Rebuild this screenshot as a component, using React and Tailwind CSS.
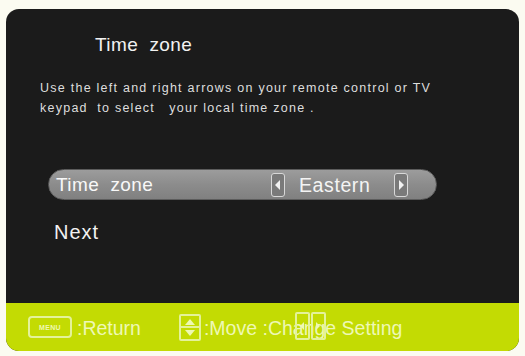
import React from "react";

const font = { fontFamily: '"Liberation Sans", Arial, sans-serif' };

const ArrowBox = ({ dir }) => (
  <span className="flex h-[24px] w-[14px] items-center justify-center rounded-[3px] border border-[#d8d8d8] bg-[#7a7a7a]">
    <svg width="8" height="12" viewBox="0 0 8 12">
      {dir === "left" ? (
        <polygon points="6,1 1,6 6,11" fill="#f2f2f2" />
      ) : (
        <polygon points="2,1 7,6 2,11" fill="#f2f2f2" />
      )}
    </svg>
  </span>
);

const App = () => {
  return (
    <div
      className="flex h-[356px] w-[525px] bg-[#fbfbf1] pl-[6px] pr-[6px] pt-[9px] pb-[5px]"
      style={font}
    >
      <div className="flex flex-1 flex-col overflow-hidden rounded-[13px] bg-[#1b1b1b]">
        <div className="flex flex-1 flex-col">
          <h1 className="ml-[89px] mt-[25px] text-[19px] leading-[22px] tracking-[0.4px] text-[#f2f2f2]">
            Time&nbsp; zone
          </h1>
          <p className="ml-[34px] mt-[22px] text-[12.5px] leading-[20px] tracking-[1.25px] text-[#dedede]">
            Use the left and right arrows on your remote control or TV
            <br />
            keypad&nbsp; to select&nbsp;&nbsp; your local time zone .
          </p>

          <div className="ml-[42px] mt-[51px] flex h-[31px] w-[389px] items-center rounded-full border border-[#5c5c5c] bg-gradient-to-b from-[#9c9c9c] via-[#8c8c8c] to-[#808080] pl-[7px]">
            <span className="w-[215px] text-[19px] leading-[22px] tracking-[0.4px] text-[#f8f8f8]">
              Time&nbsp; zone
            </span>
            <ArrowBox dir="left" />
            <span className="ml-[14px] w-[95px] text-[19.5px] leading-[22px] tracking-[0.6px] text-[#f4f4f4]">
              Eastern
            </span>
            <ArrowBox dir="right" />
          </div>

          <div className="ml-[48px] mt-[20px] text-[20px] leading-[24px] tracking-[1px] text-[#f2f2f2]">
            Next
          </div>
        </div>

        <div className="flex h-[48px] items-center bg-[#c3db03] pl-[22px] text-[19.5px] leading-[22px] text-[#eef8b4]">
          <span className="flex h-[22px] w-[44px] items-center justify-center rounded-[4px] border-2 border-[#e4f29a] text-[7px] font-bold leading-none tracking-[0.3px]">
            MENU
          </span>
          <span className="ml-[5px] mt-[2px]">:Return</span>
          <span className="ml-[38px] flex h-[27px] w-[22px] flex-col items-center justify-between rounded-[2px] border-2 border-[#e4f29a] py-[2px]">
            <svg width="12" height="8" viewBox="0 0 12 8">
              <polygon points="6,1 11,7 1,7" fill="#eef8b4" />
            </svg>
            <span className="h-[2px] w-full bg-[#e4f29a]" />
            <svg width="12" height="8" viewBox="0 0 12 8">
              <polygon points="1,1 11,1 6,7" fill="#eef8b4" />
            </svg>
          </span>
          <span className="relative ml-[3px] mt-[2px]">
            :Move :Change Setting
            <span className="absolute left-[91px] top-[-5px] flex gap-[1px]">
              <span className="flex h-[28px] w-[15px] items-center justify-center rounded-[2px] border-2 border-[#e4f29a]">
                <svg width="6" height="10" viewBox="0 0 6 10">
                  <polygon points="5,1 1,5 5,9" fill="#eef8b4" />
                </svg>
              </span>
              <span className="flex h-[28px] w-[15px] items-center justify-center rounded-[2px] border-2 border-[#e4f29a]">
                <svg width="6" height="10" viewBox="0 0 6 10">
                  <polygon points="1,1 5,5 1,9" fill="#eef8b4" />
                </svg>
              </span>
            </span>
          </span>
        </div>
      </div>
    </div>
  );
};

export default App;
